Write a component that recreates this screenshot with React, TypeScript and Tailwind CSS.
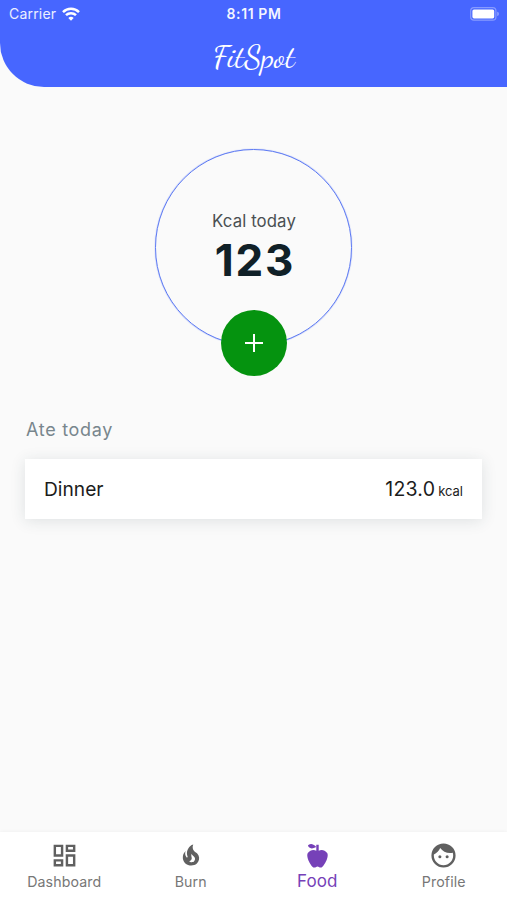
import type { ReactNode } from "react";
import { MdOutlineDashboard } from "react-icons/md";

function WifiIcon() {
  return (
    <svg width="18" height="14" viewBox="0 0 18 14" fill="none" stroke="white" strokeWidth="2.5">
      <path d="M1 5.1a11.4 11.4 0 0 1 16 0" />
      <path d="M4 8.2a7.1 7.1 0 0 1 10 0" />
      <path d="M9 13.8 6.3 11a3.9 3.9 0 0 1 5.4 0Z" fill="white" stroke="none" />
    </svg>
  );
}

function BatteryIcon() {
  return (
    <svg width="30" height="14" viewBox="0 0 30 14">
      <rect x="0.7" y="0.7" width="25.2" height="12.4" rx="3.2" fill="none" stroke="white" strokeOpacity="0.35" strokeWidth="1.2" />
      <rect x="2.4" y="2.4" width="21.8" height="9" rx="1.6" fill="white" />
      <path d="M27.3 4.8c2 .7 2 3.6 0 4.3Z" fill="white" fillOpacity="0.45" />
    </svg>
  );
}

function FireIcon() {
  return (
    <svg width="28" height="28" viewBox="0 0 24 24" fill="currentColor">
      <path d="M17.66 11.2C17.43 10.9 17.15 10.64 16.89 10.38C16.22 9.78 15.46 9.35 14.82 8.72C13.33 7.26 13 4.85 13.95 3C13 3.23 12.17 3.75 11.46 4.32C8.87 6.4 7.85 10.07 9.07 13.22C9.11 13.32 9.15 13.42 9.15 13.55C9.15 13.77 9 13.97 8.8 14.05C8.57 14.15 8.33 14.09 8.14 13.93C8.08 13.88 8.04 13.83 8 13.76C6.87 12.33 6.69 10.28 7.45 8.64C5.78 10 4.87 12.3 5 14.47C5.06 14.97 5.12 15.47 5.29 15.97C5.43 16.57 5.7 17.17 6 17.7C7.08 19.43 8.95 20.67 10.96 20.92C13.1 21.19 15.39 20.8 17.03 19.32C18.86 17.66 19.5 15 18.56 12.72L18.43 12.46C18.22 12 17.66 11.2 17.66 11.2M14.5 17.5C14.22 17.74 13.76 18 13.4 18.1C12.28 18.5 11.16 17.94 10.5 17.28C11.69 17 12.4 16.12 12.61 15.23C12.78 14.43 12.46 13.77 12.33 13C12.21 12.26 12.23 11.63 12.5 10.94C12.69 11.32 12.89 11.7 13.13 12C13.9 13 15.11 13.44 15.37 14.8C15.41 14.94 15.43 15.08 15.43 15.23C15.46 16.05 15.1 16.95 14.5 17.5Z" />
    </svg>
  );
}

function AppleIcon() {
  return (
    <svg width="29" height="29" viewBox="0 0 24 24" fill="currentColor">
      <path d="M20,10C22,13 17,22 15,22C13,22 13,21 12,21C11,21 11,22 9,22C7,22 2,13 4,10C6,7 9,7 11,8V5C5.38,8.07 4.11,3.78 4.11,3.78C4.11,3.78 6.77,0.19 11,5V3H13V8C15,7 18,7 20,10Z" />
    </svg>
  );
}

function FaceIcon() {
  return (
    <svg width="29" height="29" viewBox="0 0 24 24" fill="currentColor">
      <path
        fillRule="evenodd"
        d="M12 2a10 10 0 1 0 0 20 10 10 0 0 0 0-20ZM12 20c-4.41 0-8-3.59-8-8 0-.29.02-.58.05-.86 2.36-1.05 4.23-2.98 5.21-5.37C11.07 8.33 14.05 10 17.42 10c.78 0 1.53-.09 2.25-.26.21.71.33 1.47.33 2.26 0 4.41-3.59 8-8 8Z"
      />
      <circle cx="9" cy="13" r="1.25" />
      <circle cx="15" cy="13" r="1.25" />
    </svg>
  );
}

function Tab({ label, icon, active = false }: { label: string; icon: ReactNode; active?: boolean }) {
  return (
    <button className={`flex flex-1 flex-col items-center pt-2 ${active ? "text-[#7641b8]" : "text-[#606060]"}`}>
      <span className="flex h-[30px] items-center justify-center">{icon}</span>
      <span
        className={
          active
            ? "pt-px text-[17px] leading-[20px] tracking-[0.1px]"
            : "pt-[2px] text-[14.2px] leading-[20px] tracking-[0.1px] text-[#777777]"
        }
      >
        {label}
      </span>
    </button>
  );
}

export default function App() {
  return (
    <div className="flex h-[900px] w-full flex-col overflow-hidden bg-[#fafafa] font-['Inter','Liberation_Sans',sans-serif]">
      <header className="h-[87px] shrink-0 rounded-bl-[44px] bg-[#4766ff] text-white">
        <div className="grid h-[27px] grid-cols-3 items-center pr-[7px] pl-[9px]">
          <div className="flex items-center gap-[6px] text-[14px] tracking-[0.2px] text-white/90">
            <span>Carrier</span>
            <WifiIcon />
          </div>
          <span className="pr-px text-center text-[14px] font-semibold tracking-[0.6px] text-white/95">8:11 PM</span>
          <span className="flex justify-end">
            <BatteryIcon />
          </span>
        </div>
        <h1 className="pt-[9px] pl-px text-center font-['Dancing_Script','Liberation_Serif',cursive] text-[32px] leading-[42px]">
          FitSpot
        </h1>
      </header>

      <main className="flex-1 px-[25px] pt-[62px]">
        <section className="relative mx-auto flex size-[197px] flex-col items-center rounded-full border border-[#5c79f3] pt-[59px] shadow-[0_0_1px_#5c79f3]">
          <p className="pl-px text-[16.8px] leading-[24px] tracking-[0.1px] text-[#4a5052]">Kcal today</p>
          <p className="pt-[3px] pl-[3px] text-[44px] leading-[48px] font-bold tracking-[1.8px] text-[#102027]">123</p>
          <button
            aria-label="Add"
            className="absolute top-[160px] left-[65px] flex size-[66px] items-center justify-center rounded-full bg-[#05930f]"
          >
            <svg width="18" height="18" viewBox="0 0 18 18" stroke="white" strokeWidth="2">
              <path d="M9 0v18M0 9h18" />
            </svg>
          </button>
        </section>

        <h2 className="pt-[71px] pl-px text-[18px] leading-[26px] tracking-[0.7px] text-[#78868d]">Ate today</h2>
        <div className="mt-4 flex h-[60px] items-center justify-between bg-white px-[19px] text-[#1c1c1c] shadow-[0_2px_14px_rgba(40,60,70,0.13)]">
          <span className="text-[19.2px] leading-[28px]">Dinner</span>
          <span className="flex items-baseline gap-[3px] pt-[3px] leading-[29px]">
            <span className="text-[19.5px] tracking-[0.2px]">123.0</span>
            <span className="text-[13px]">kcal</span>
          </span>
        </div>
      </main>

      <nav className="flex h-[68px] shrink-0 items-start bg-white pl-px shadow-[0_-1px_3px_rgba(0,0,0,0.03)]">
        <Tab label="Dashboard" icon={<MdOutlineDashboard size={29} />} />
        <Tab label="Burn" icon={<FireIcon />} />
        <Tab label="Food" icon={<AppleIcon />} active />
        <Tab label="Profile" icon={<FaceIcon />} />
      </nav>
    </div>
  );
}
